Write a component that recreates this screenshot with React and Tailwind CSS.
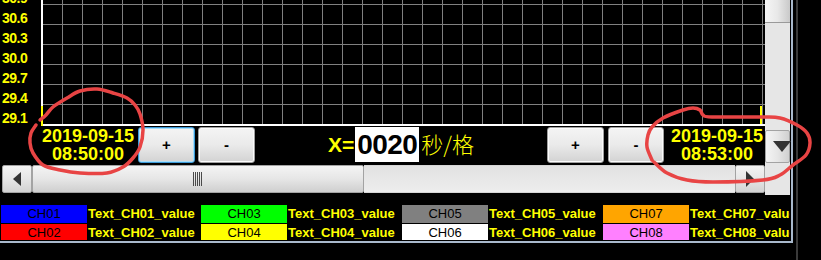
import React from "react";

const LABELS = ["30.9", "30.6", "30.3", "30.0", "29.7", "29.4", "29.1"];
const GRID_V = Array.from({ length: 36 }, (_, i) => 21 + 20 * i + 0.5);
const GRID_H = [4, 24, 44, 64, 84, 104].map((y) => y + 0.5);

const ROWS = [
  [
    ["CH01", "bg-[#0000ff]"],
    ["CH03", "bg-[#00ff00]"],
    ["CH05", "bg-[#808080]"],
    ["CH07", "bg-[#ffa500]"],
  ],
  [
    ["CH02", "bg-[#ff0000]"],
    ["CH04", "bg-[#ffff00]"],
    ["CH06", "bg-white"],
    ["CH08", "bg-[#ff80ff]"],
  ],
];
const TEXT_W = ["w-[114px]", "w-[115px]", "w-[115px]", "w-[115px]"];

// red hand-drawn marks
const LEFT_MARK = [
  [40, 120], [46, 115], [53, 107], [67, 98], [80, 91], [97, 89], [113, 93], [127, 98],
  [135, 105], [140, 114], [143, 130], [140, 147], [133, 158], [123, 167], [107, 173],
  [80, 173], [60, 170], [43, 165], [33, 153], [30, 143], [31, 133], [36, 125],
];
const RIGHT_MARK = [
  [652, 160], [647, 147], [648, 135], [652, 127], [663, 118], [683, 110], [693, 108],
  [700, 110], [703, 115], [712, 117], [762, 117], [780, 118], [797, 125], [807, 133],
  [810, 143], [806, 155], [793, 165], [780, 175], [763, 180], [713, 182], [687, 180],
  [667, 173], [654, 162],
];

const smooth = (pts) => {
  let d = `M${pts[0][0]} ${pts[0][1]}`;
  for (let i = 0; i < pts.length - 1; i++) {
    const p0 = pts[i - 1] || pts[i];
    const p1 = pts[i];
    const p2 = pts[i + 1];
    const p3 = pts[i + 2] || p2;
    const c1 = [p1[0] + (p2[0] - p0[0]) / 6, p1[1] + (p2[1] - p0[1]) / 6];
    const c2 = [p2[0] - (p3[0] - p1[0]) / 6, p2[1] - (p3[1] - p1[1]) / 6];
    d += ` C${c1[0]} ${c1[1]} ${c2[0]} ${c2[1]} ${p2[0]} ${p2[1]}`;
  }
  return d;
};

const WinButton = ({ label, focused, width }) => (
  <div
    className={`${width} h-[36px] mt-[1px] rounded-[3px] border flex items-center justify-center text-[15px] font-bold text-black bg-linear-to-b from-[#f4f4f4] via-[#eaeaea] to-[#d3d3d3] ${
      focused
        ? "border-[#3c9ad8] shadow-[inset_0_0_0_1px_#a6dcf7]"
        : "border-[#a0a0a0] shadow-[inset_0_0_0_1px_#fbfbfb]"
    }`}
  >
    {label}
  </div>
);

const DateBlock = ({ time, className }) => (
  <div
    className={`${className} pt-[1px] text-center text-[18px] leading-[18px] font-bold text-[#ffff00]`}
  >
    <div>2019-09-15</div>
    <div>{time}</div>
  </div>
);

const Chart = () => (
  <div className="flex h-[126px]">
    <div className="w-[41px] h-[126px] overflow-hidden">
      <div className="-mt-[12px] pl-[2px] flex flex-col">
        {LABELS.map((l) => (
          <div key={l} className="text-[14px] leading-[20px] tracking-[-0.5px] font-bold text-[#ffff00]">
            {l}
          </div>
        ))}
      </div>
    </div>
    <svg width="724" height="126" className="block">
      <rect width="724" height="126" fill="#000" />
      {GRID_V.map((x) => (
        <line key={x} x1={x} x2={x} y1="0" y2="124" stroke="#808080" />
      ))}
      {GRID_H.map((y) => (
        <line key={y} x1="0" x2="724" y1={y} y2={y} stroke="#808080" />
      ))}
      <rect x="0" y="0" width="2" height="126" fill="#ffffff" />
      <rect x="0" y="124" width="724" height="2" fill="#ffffff" />
      <rect x="0" y="106" width="2" height="20" fill="#ffff00" />
      <rect x="719" y="106" width="2" height="18" fill="#ffff00" />
    </svg>
  </div>
);

const Controls = () => (
  <div className="flex h-[39px] items-start">
    <div className="w-[40px]" />
    <DateBlock time="08:50:00" className="w-[96px]" />
    <div className="ml-[2px]">
      <WinButton label="+" focused width="w-[57px]" />
    </div>
    <div className="ml-[3px]">
      <WinButton label="-" width="w-[57px]" />
    </div>
    <div className="w-[292px] flex pl-[73px] mt-[1px]">
      <div className="text-[21px] leading-[35px] font-bold text-[#ffff00]">X=</div>
      <div className="ml-[1px] w-[64px] h-[35px] bg-white flex justify-center text-[28px] leading-[35px] font-bold tracking-[-0.5px] text-black">
        0020
      </div>
      <div className="ml-[2px] -mt-[1px] text-[22px] leading-[35px] font-light text-[#ffff00] font-['Noto_Sans_CJK_SC',sans-serif]">
        秒/格
      </div>
    </div>
    <WinButton label="+" width="w-[57px]" />
    <div className="ml-[4px]">
      <WinButton label="-" width="w-[56px]" />
    </div>
    <DateBlock time="08:53:00" className="ml-[5px] w-[96px]" />
  </div>
);

const HScroll = () => (
  <div className="ml-[2px] flex h-[28px] w-[763px]">
    <div className="w-[30px] h-full border border-[#a3a3a3] rounded-[2px] bg-linear-to-b from-[#f3f3f3] via-[#e6e6e6] to-[#d2d2d2] flex items-center justify-center">
      <svg width="10" height="14">
        <polygon points="1,7 9,0 9,14" fill="#333" />
      </svg>
    </div>
    <div className="w-[332px] h-full border border-[#a3a3a3] rounded-[2px] bg-linear-to-b from-[#f4f4f4] via-[#e6e6e6] to-[#cfcfcf] flex items-center justify-center">
      <svg width="10" height="14">
        {[0, 2, 4, 6, 8].map((x) => (
          <rect key={x} x={x} y="0" width="1" height="14" fill="#4a4a4a" />
        ))}
      </svg>
    </div>
    <div className="flex-1 h-full bg-linear-to-b from-[#e2e2e2] to-[#ededed] border-y border-[#d6d6d6]" />
    <div className="w-[30px] h-full border border-[#a3a3a3] rounded-[2px] bg-linear-to-b from-[#f3f3f3] via-[#e6e6e6] to-[#d2d2d2] flex items-center justify-center">
      <svg width="10" height="16">
        <polygon points="1,0 9,8 1,16" fill="#333" />
      </svg>
    </div>
  </div>
);

const VScroll = () => (
  <div className="w-[25px] h-[195px] flex flex-col bg-[#e6e6e6]">
    <div className="h-[23px] border-b border-[#9a9a9a] bg-linear-to-r from-[#f6f6f6] via-[#e8e8e8] to-[#c9c9c9]" />
    <div className="h-[107px]" />
    <div className="h-[33px] border border-[#a3a3a3] rounded-[2px] bg-linear-to-r from-[#f4f4f4] via-[#e6e6e6] to-[#d0d0d0]">
      <svg width="25" height="31" className="block">
        <polygon points="7,10 25,10 16,21" fill="#333" />
      </svg>
    </div>
    <div className="flex-1" />
  </div>
);

const Legend = () => (
  <div className="w-[790px] overflow-hidden">
    {ROWS.map((row, r) => (
      <div
        key={r}
        className={`flex w-[820px] overflow-hidden ${r === 0 ? "h-[18px] mb-[1px]" : "h-[16px]"}`}
      >
        <div className="w-[1px]" />
        {row.map(([name, bg], i) => (
          <React.Fragment key={name}>
            <div className={`w-[86px] h-full ${bg} text-center text-[13px] leading-[18px] text-black`}>
              {name}
            </div>
            <div
              className={`${TEXT_W[i]} h-full pl-[1px] whitespace-nowrap text-[13px] leading-[18px] font-bold text-[#ffff00]`}
            >
              {`Text_${name}_value`}
            </div>
          </React.Fragment>
        ))}
      </div>
    ))}
  </div>
);

export default function App() {
  return (
    <div className="relative w-[821px] h-[260px] bg-black flex overflow-hidden font-['Liberation_Sans',Arial,sans-serif]">
      <div className="w-[793px] h-[243px] border-r-2 border-b-2 border-[#a9b9cc] flex flex-col">
        <div className="flex h-[195px]">
          <div className="w-[765px] flex flex-col">
            <Chart />
            <Controls />
            <HScroll />
          </div>
          <VScroll />
        </div>
        <div className="h-[10px]" />
        <Legend />
      </div>
      <div className="w-[3px]" />
      <div className="w-[2px] h-full bg-[#3a3a3a]" />

      <svg
        width="821"
        height="260"
        className="absolute top-0 left-0 pointer-events-none"
      >
        <path d={smooth(LEFT_MARK)} fill="none" stroke="#e84444" strokeWidth="3.5" strokeLinecap="round" strokeLinejoin="round" />
        <path d={smooth(RIGHT_MARK)} fill="none" stroke="#e84444" strokeWidth="3.5" strokeLinecap="round" strokeLinejoin="round" />
      </svg>
    </div>
  );
}
